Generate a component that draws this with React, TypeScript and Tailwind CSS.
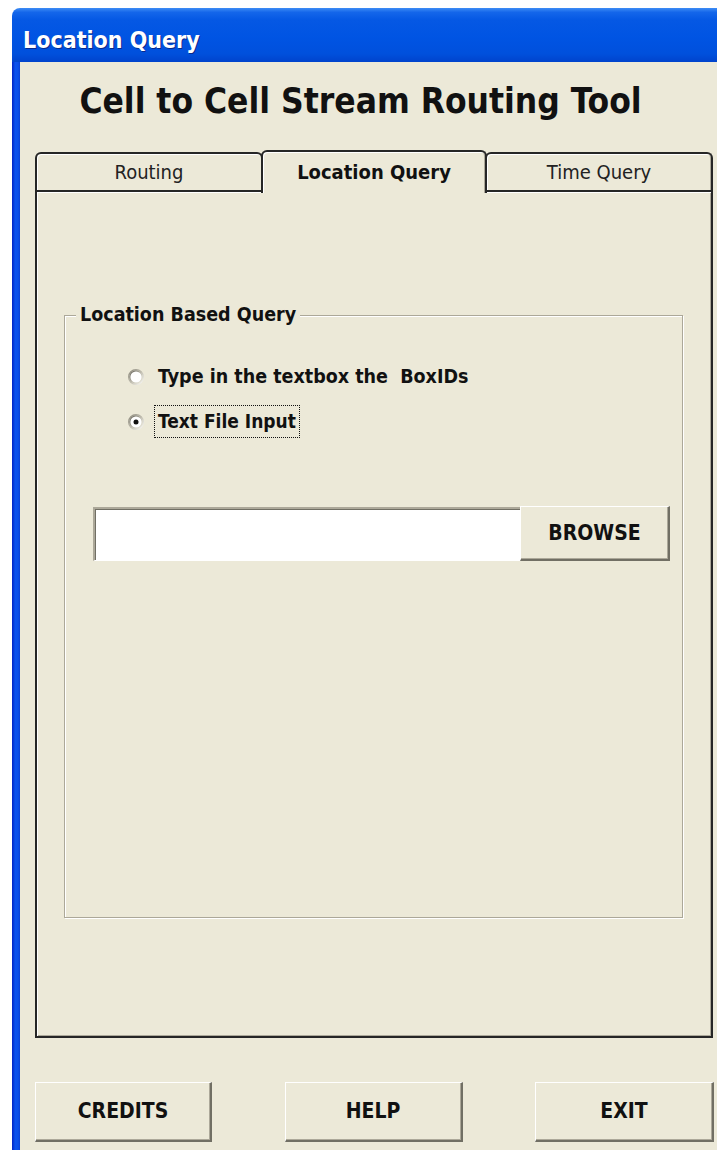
import React from "react";

// Classic 3D option button drawn as a small SVG
function RadioDot({ id, checked }: { id: string; checked?: boolean }) {
  return (
    <svg width="16" height="16" viewBox="0 0 16 16" className="shrink-0">
      <defs>
        <linearGradient id={`${id}-outer`} x1="0" y1="0" x2="1" y2="1">
          <stop offset="0" stopColor="#8a877a" />
          <stop offset="0.5" stopColor="#bdbaad" />
          <stop offset="1" stopColor="#ffffff" />
        </linearGradient>
        <linearGradient id={`${id}-inner`} x1="0" y1="0" x2="1" y2="1">
          <stop offset="0" stopColor="#5e5c53" />
          <stop offset="0.5" stopColor="#b5b2a5" />
          <stop offset="1" stopColor="#f1efe2" />
        </linearGradient>
      </defs>
      <circle cx="8" cy="8" r="7.4" fill="none" stroke={`url(#${id}-outer)`} strokeWidth="1.2" />
      <circle cx="8" cy="8" r="6.2" fill="#ffffff" stroke={`url(#${id}-inner)`} strokeWidth="1.2" />
      {checked && <circle cx="8" cy="8" r="2.5" fill="#111111" />}
    </svg>
  );
}

function RaisedButton({ label, width }: { label: string; width: string }) {
  return (
    <button
      type="button"
      className={`${width} h-full bg-[#ece9d8] border-t border-l border-t-white border-l-white border-r-2 border-b-2 border-r-[#716f64] border-b-[#716f64] shadow-[inset_-1px_-1px_0_#aca899] text-[21px] font-bold text-[#111] leading-none flex items-center justify-center`}
    >
      {label}
    </button>
  );
}

export default function App() {
  return (
    <div className="w-[717px] h-[1150px] bg-white overflow-hidden [font-family:'DejaVu_Sans_Condensed','DejaVu_Sans',sans-serif]">
      <div className="ml-[12px] pt-[8px] w-[705px] h-[1150px] flex flex-col">
        {/* title bar */}
        <div className="h-[54px] shrink-0 rounded-tl-[8px] bg-[linear-gradient(to_bottom,#3d8cf5_0%,#1466ea_8%,#0558e4_22%,#0054e3_55%,#0050dc_85%,#0043cc_100%)] flex items-center pl-[11px] pt-[10px]">
          <span className="text-white font-bold text-[23px] leading-none [text-shadow:1px_1px_0_#0a2a8c]">
            Location Query
          </span>
        </div>

        {/* window body */}
        <div className="flex-1 flex">
          <div className="w-[8px] shrink-0 bg-[linear-gradient(to_right,#0024c4,#0a52ee_40%,#0a4ee8_75%,#0840d6)]" />
          <div className="flex-1 bg-[#ece9d8] flex flex-col">
            {/* heading */}
            <div className="h-[88px] pt-[22px] pr-[16px] text-center">
              <h1 className="text-[35px] font-bold leading-none text-[#111]">
                Cell to Cell Stream Routing Tool
              </h1>
            </div>

            {/* tab strip */}
            <div className="flex items-end pl-[15px] h-[40px]">
              <div className="w-[228px] h-[38px] border-t-2 border-l-2 border-r-2 border-[#262626] rounded-t-[6px] shadow-[inset_1px_1px_0_#fff] flex items-center justify-center text-[20px] text-[#222] leading-none">
                Routing
              </div>
              <div className="relative z-10 -ml-[2px] -mb-[3px] w-[226px] h-[43px] border-t-2 border-l-2 border-r-2 border-[#262626] rounded-t-[6px] bg-[#ece9d8] shadow-[inset_1px_1px_0_#fff,inset_-1px_0_0_#aca899] flex items-center justify-center text-[20px] font-bold text-[#111] leading-none pb-[2px]">
                Location Query
              </div>
              <div className="-ml-[2px] w-[228px] h-[38px] border-t-2 border-l-2 border-r-2 border-[#262626] rounded-t-[6px] shadow-[inset_1px_1px_0_#fff,inset_-1px_0_0_#aca899] flex items-center justify-center text-[20px] text-[#222] leading-none">
                Time Query
              </div>
            </div>

            {/* tab page */}
            <div className="ml-[15px] w-[678px] h-[848px] border-2 border-[#262626] shadow-[inset_1px_1px_0_#fff,inset_-1px_-1px_0_#aca899]">
              {/* group frame */}
              <div className="relative mt-[123px] ml-[27px] w-[619px] h-[603px] border border-[#aca899] shadow-[1px_1px_0_#fff,inset_1px_1px_0_#fff]">
                <span className="absolute left-[11px] -top-[12px] px-[4px] bg-[#ece9d8] text-[19.5px] font-bold leading-[22px] text-[#111]">
                  Location Based Query
                </span>

                <div className="pt-[44px] pl-[63px] flex flex-col gap-[12px]">
                  <label className="h-[33px] flex items-center">
                    <RadioDot id="opt-text" />
                    <span className="ml-[10px] h-[33px] px-[3px] border border-transparent flex items-center text-[19.5px] font-bold text-[#111] whitespace-pre leading-none">
                      Type in the textbox the  BoxIDs
                    </span>
                  </label>
                  <label className="h-[33px] flex items-center">
                    <RadioDot id="opt-file" checked />
                    <span className="ml-[10px] h-[33px] px-[3px] border border-dotted border-[#111] flex items-center text-[19px] font-bold text-[#111] leading-none">
                      Text File Input
                    </span>
                  </label>
                </div>

                <div className="mt-[68px] ml-[28px] flex h-[55px]">
                  <input
                    type="text"
                    readOnly
                    className="w-[427px] h-[54px] mt-[1px] bg-white border-t-2 border-l-2 border-t-[#aca899] border-l-[#aca899] border-b border-b-white shadow-[inset_1px_1px_0_#716f64] outline-none"
                  />
                  <RaisedButton label="BROWSE" width="w-[150px]" />
                </div>
              </div>
            </div>

            {/* command buttons */}
            <div className="mt-[44px] ml-[15px] w-[679px] h-[60px] flex justify-between">
              <RaisedButton label="CREDITS" width="w-[177px]" />
              <RaisedButton label="HELP" width="w-[178px]" />
              <RaisedButton label="EXIT" width="w-[179px]" />
            </div>
          </div>
        </div>
      </div>
    </div>
  );
}
